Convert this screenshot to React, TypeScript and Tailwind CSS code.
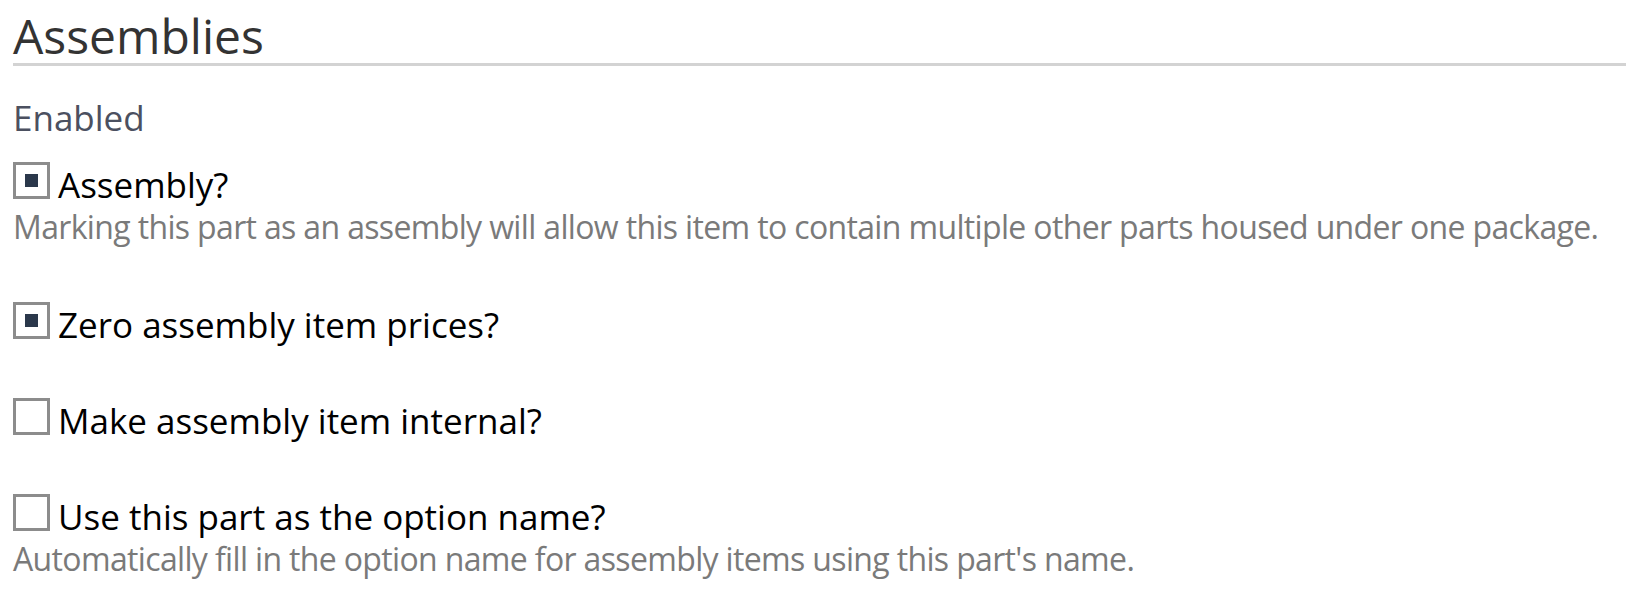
import React from 'react'

type Option = {
  label: string
  checked: boolean
  help?: string
}

const options: Option[] = [
  {
    label: 'Assembly?',
    checked: true,
    help: 'Marking this part as an assembly will allow this item to contain multiple other parts housed under one package.',
  },
  { label: 'Zero assembly item prices?', checked: true },
  { label: 'Make assembly item internal?', checked: false },
  {
    label: 'Use this part as the option name?',
    checked: false,
    help: "Automatically fill in the option name for assembly items using this part's name.",
  },
]

function Checkbox({ checked }: { checked: boolean }): React.JSX.Element {
  return (
    <span className="flex h-[37px] w-[37px] shrink-0 items-center justify-center border-[3px] border-[#8c8c8c] bg-white">
      {checked && <span className="h-[13px] w-[13px] bg-[#2b384b]" />}
    </span>
  )
}

export default function App(): React.JSX.Element {
  return (
    <div className="min-h-screen bg-white pl-[13px] font-['Open_Sans',sans-serif]">
      {/* Section heading */}
      <h1 className="border-b-[3px] border-[#d3d3d3] pt-[9px] text-[48px] font-normal leading-[54px] text-[#333333]">
        Assemblies
      </h1>

      <div className="mt-[32px] text-[35px] leading-[40px] text-[#4b5060]">Enabled</div>

      <div className="mt-[24px] flex flex-col gap-[55px]">
        {options.map((opt) => (
          <div key={opt.label} className="flex flex-col">
            <label className="flex items-start gap-[8px] text-black">
              <Checkbox checked={opt.checked} />
              <span className="mt-[4px] text-[35px] leading-[37px]">{opt.label}</span>
            </label>
            {opt.help && (
              <p className="mt-[4px] text-[32px] leading-[40px] tracking-[-0.65px] text-[#7a7a7a]">
                {opt.help}
              </p>
            )}
          </div>
        ))}
      </div>
    </div>
  )
}
